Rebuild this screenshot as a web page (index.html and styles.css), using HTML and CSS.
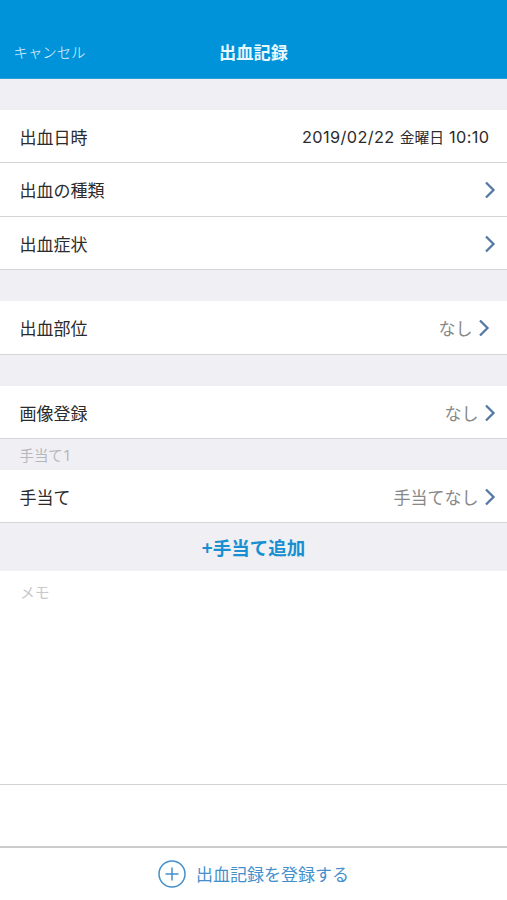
FILE: index.html
```html
<!DOCTYPE html>
<html lang="ja">
<head>
<meta charset="utf-8">
<title>出血記録</title>
<link rel="stylesheet" href="styles.css">
</head>
<body>
<header class="nav"><span class="cancel">キャンセル</span><h1>出血記録</h1><span></span></header>
<main>
<section class="group first">
<div class="row"><span>出血日時</span><span class="date">2019/02/22 <span class="weekday">金曜日</span> 10:10</span></div>
<div class="row"><span>出血の種類</span><svg class="chev" viewBox="0 0 12 18"><path d="M2 1.5 9.5 9 2 16.5"/></svg></div>
<div class="row"><span>出血症状</span><svg class="chev" viewBox="0 0 12 18"><path d="M2 1.5 9.5 9 2 16.5"/></svg></div>
</section>
<section class="group">
<div class="row inset"><span>出血部位</span><span class="value">なし</span><svg class="chev" viewBox="0 0 12 18"><path d="M2 1.5 9.5 9 2 16.5"/></svg></div>
</section>
<section class="group">
<div class="row"><span>画像登録</span><span class="value">なし</span><svg class="chev" viewBox="0 0 12 18"><path d="M2 1.5 9.5 9 2 16.5"/></svg></div>
</section>
<h2 class="caption">手当て<span class="index">1</span></h2>
<div class="row care"><span>手当て</span><span class="value">手当てなし</span><svg class="chev" viewBox="0 0 12 18"><path d="M2 1.5 9.5 9 2 16.5"/></svg></div>
<div class="add">+手当て追加</div>
<div class="memo">メモ</div>
</main>
<footer class="submit"><svg class="plus" viewBox="0 0 28 28"><circle cx="14" cy="14" r="13"/><path d="M14 7.5v13M7.5 14h13"/></svg><span>出血記録を登録する</span></footer>
</body>
</html>
```

FILE: styles.css
```css
* { box-sizing: border-box; }
body { margin: 0; height: 900px; display: flex; flex-direction: column; background: #fff; color: #2b2b2b; font: 17px/24px "Noto Sans CJK JP", sans-serif; overflow: hidden; }
.nav { height: 79px; padding: 25px 13.5px 0; display: grid; grid-template-columns: 1fr auto 1fr; align-items: center; background: #0093d9; color: #fff; border-bottom: 1px solid #2d9fd8; }
.cancel { font-size: 14.4px; font-weight: 300; color: #e0f4ff; }
h1 { margin: 0; font-size: 17.2px; line-height: 24px; font-weight: 700; color: #e9f8ff; }
main { background: #efeff4; }
.group { padding-top: 31px; }
.row { height: 53.4px; padding: 1.5px 11.5px 0 19.5px; display: flex; align-items: center; background: #fff; border-bottom: 1px solid #d5d5d9; }
.row > :first-child { margin-right: auto; }
.inset { padding-right: 17.5px; }
.date { margin-right: 6px; padding-top: 1px; font: 16.3px/24px Inter, "Noto Sans CJK JP", sans-serif; letter-spacing: 0.4px; }
.weekday { font-size: 14.8px; letter-spacing: 0; }
.value { margin-right: 5px; color: #888; }
.chev { width: 12px; height: 18px; fill: none; stroke: #5578a6; stroke-width: 2.3; }
.caption { margin: 0; height: 31px; padding: 4px 19.5px; font: 14.4px/24px "Noto Sans CJK JP", sans-serif; color: #b7b7bb; }
.index { margin-left: 1px; font-family: Inter, sans-serif; }
.add { height: 48px; display: flex; align-items: center; justify-content: center; color: #178fd0; font-size: 18.5px; font-weight: 700; }
.memo { height: 214px; padding: 9px 20px; background: #fff; border-bottom: 1px solid #d2d2d2; color: #c8c8cc; font-size: 14.8px; }
.submit { height: 54px; margin-top: auto; padding-bottom: 1px; border-top: 2px solid #ccc; display: flex; align-items: center; justify-content: center; gap: 10px; color: #4490cd; }
.plus { width: 28px; height: 28px; fill: none; stroke: #4490cd; stroke-width: 1.5; }
```
